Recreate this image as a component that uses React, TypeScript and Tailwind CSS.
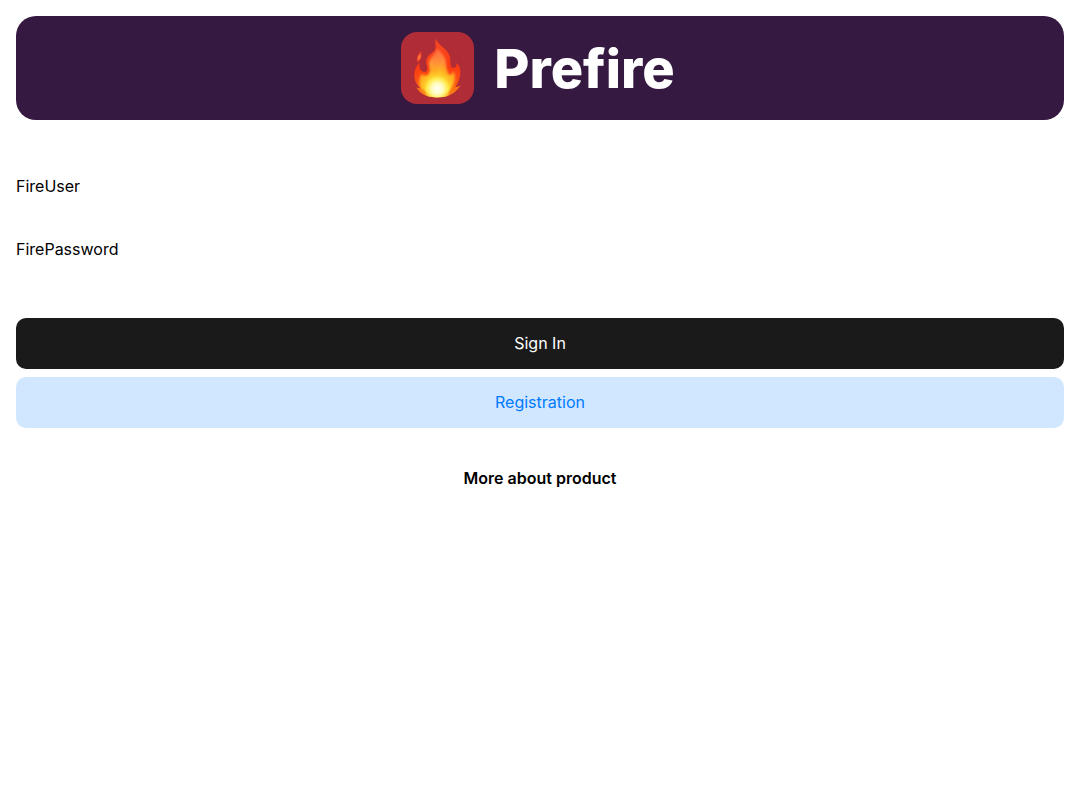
function FlameLogo() {
  return (
    <svg viewBox="15 18 219 216" className="h-18 w-[73px] shrink-0 rounded-2xl bg-[#b02c37]" aria-hidden="true">
      <defs>
        <linearGradient id="outer" x1="0" y1="36" x2="0" y2="214" gradientUnits="userSpaceOnUse">
          <stop offset="0" stopColor="#f64a20" />
          <stop offset="0.5" stopColor="#fb3a12" />
          <stop offset="0.8" stopColor="#fb5a14" />
          <stop offset="1" stopColor="#ff9a20" />
        </linearGradient>
        <radialGradient id="middle" cx="124" cy="190" r="108" gradientUnits="userSpaceOnUse">
          <stop offset="0" stopColor="#fff8b0" />
          <stop offset="0.25" stopColor="#ffe334" />
          <stop offset="0.5" stopColor="#ffb020" />
          <stop offset="0.75" stopColor="#ff9038" />
          <stop offset="1" stopColor="#ff7440" />
        </radialGradient>
        <radialGradient id="core" cx="124" cy="188" r="42" gradientUnits="userSpaceOnUse">
          <stop offset="0" stopColor="#fffff4" />
          <stop offset="0.4" stopColor="#fffbc0" />
          <stop offset="0.75" stopColor="#fff05a" stopOpacity="0.7" />
          <stop offset="1" stopColor="#ffe030" stopOpacity="0" />
        </radialGradient>
        <filter id="soft" x="-20%" y="-20%" width="140%" height="140%">
          <feGaussianBlur stdDeviation="3" />
        </filter>
        <clipPath id="flame">
          <path d="M119 36 C121 53 148 65 158 83 C167 99 160 116 167 123 C174 130 186 122 179 110 C193 119 195 133 192 149 C190 163 184 174 178 184 C183 184 188 181 193 178 C186 192 172 203 157 209 C139 216 105 216 88 208 C76 203 66 195 61 184 C65 187 70 188 74 187 C61 176 54 161 55 144 C56 130 62 119 71 109 C68 123 73 137 85 138 C96 138 94 125 92 117 C88 101 93 90 105 83 C119 75 121 64 118 52 Z" />
        </clipPath>
      </defs>
      <g clipPath="url(#flame)">
        <rect x="50" y="30" width="150" height="190" fill="url(#outer)" />
        <path d="M124 67 C132 78 147 88 149 105 C151 119 151 132 157 143 C162 151 169 144 172 135 C181 151 177 170 166 187 C157 202 146 218 123 219 C99 218 82 205 74 187 C67 171 70 154 77 143 C86 153 98 149 102 139 C107 126 95 119 100 105 C104 93 120 85 124 67 Z" fill="url(#middle)" filter="url(#soft)" />
        <path d="M105 105 C112 121 105 132 111 143 C117 156 125 132 132 120 C135 139 146 152 152 164 C144 174 106 177 95 164 C101 149 98 123 105 105 Z" fill="#ffd238" opacity="0.3" filter="url(#soft)" />
        <path d="M62 183 C78 193 86 204 106 213 M191 179 C174 193 160 204 142 213" fill="none" stroke="#fb7618" strokeWidth="7" filter="url(#soft)" />
        <ellipse cx="124" cy="188" rx="38" ry="40" fill="url(#core)" />
      </g>
      <path d="M77 75 C65 86 59 96 65 108 C75 103 79 91 75 84 Z" fill="#f84621" />
      <path d="M73 84 C66 91 64 98 67 103 C73 97 75 91 73 84 Z" fill="#ff7c43" />
    </svg>
  );
}

export default function App() {
  return (
    <main className="flex min-h-screen flex-col bg-white p-4 font-['Inter','Liberation_Sans',sans-serif] text-base text-black">
      <header className="flex items-center justify-center gap-5 rounded-[20px] bg-[#351940] p-4">
        <FlameLogo />
        <h1 className="pt-0.5 pr-1 text-[54px] leading-[70px] font-extrabold text-white">Prefire</h1>
      </header>
      <form className="mt-9.5 flex flex-col" onSubmit={(event) => event.preventDefault()}>
        <div className="flex flex-col gap-2">
          <input
            type="text"
            aria-label="User name"
            defaultValue="FireUser"
            className="h-[55px] w-full outline-none"
          />
          <input
            type="text"
            aria-label="Password"
            defaultValue="FirePassword"
            className="h-[55px] w-full outline-none"
          />
        </div>
        <div className="mt-10.5 flex flex-col gap-2">
          <button type="submit" className="h-[51px] rounded-[10px] bg-[#1a1a1a] pb-0.5 text-white">
            Sign In
          </button>
          <button type="button" className="h-[51px] rounded-[10px] bg-[#d1e7ff] pb-0.5 text-[#007aff]">
            Registration
          </button>
        </div>
      </form>
      <button type="button" className="mt-10 self-center leading-5 font-semibold">
        More about product
      </button>
    </main>
  );
}
